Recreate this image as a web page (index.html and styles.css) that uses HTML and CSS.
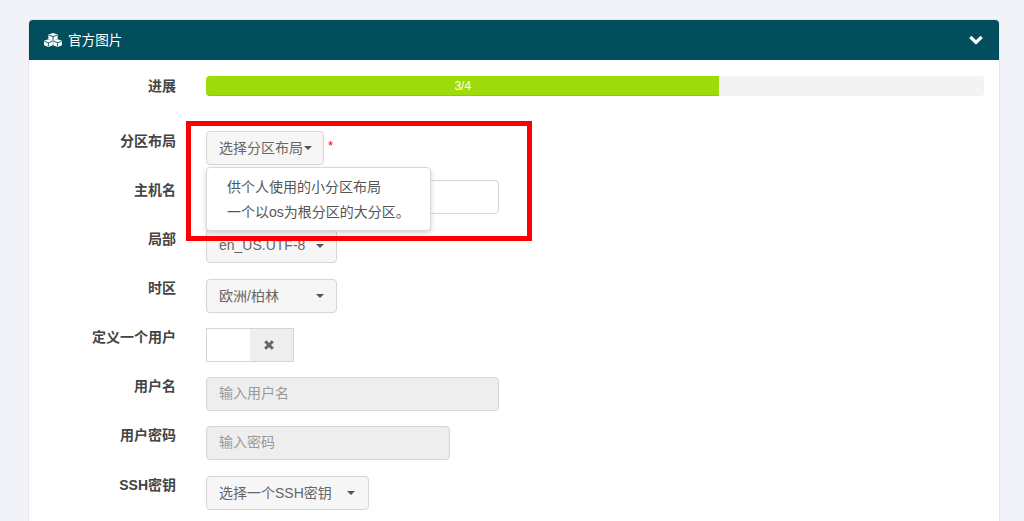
FILE: index.html
```html
<!DOCTYPE html>
<html>
<head>
  <title>官方图片</title>
  <link rel="stylesheet" href="styles.css">
</head>
<body>
  <div class="panel">
    <div class="panel-heading">
      <svg class="icon-cubes" viewBox="0 0 18 14">
        <path fill="#fff" d="M9 0 13.6 1.6V6.2L9 7.8 4.4 6.2V1.6Z"/>
        <path fill="#fff" d="M4.4 6.2 8.8 7.8V12.3L4.4 14 0 12.3V7.8Z"/>
        <path fill="#fff" d="M13.6 6.2 18 7.8V12.3L13.6 14 9.2 12.3V7.8Z"/>
        <path fill="none" stroke="#024e5d" stroke-width=".9" d="M5 2.2 9 3.6 13 2.2M9 3.6V7.2M.5 8.3 4.4 9.7 8.3 8.3M4.4 9.7V13.4M9.7 8.3 13.6 9.7 17.5 8.3M13.6 9.7V13.4"/>
      </svg>
      <span class="panel-title">官方图片</span>
      <svg class="icon-chevron" viewBox="0 0 14 10">
        <path fill="none" stroke="#fff" stroke-width="3.2" d="M1.3 1.8 7 7.5 12.7 1.8"/>
      </svg>
    </div>
    <div class="panel-body">
      <div class="form-row progress-row">
        <label class="form-label progress-label">进展</label>
        <div class="progress">
          <div class="progress-bar" style="width: 66%">3/4</div>
        </div>
      </div>

      <div class="form-row">
        <label class="form-label">分区布局</label>
        <button class="btn btn-tight">选择分区布局<span class="caret caret-tight"></span></button>
        <span class="required">*</span>
        <ul class="dropdown-menu">
          <li>供个人使用的小分区布局</li>
          <li>一个以os为根分区的大分区。</li>
        </ul>
      </div>

      <div class="form-row">
        <label class="form-label">主机名</label>
        <input class="input input-wide" type="text">
      </div>

      <div class="form-row">
        <label class="form-label">局部</label>
        <button class="btn btn-locale">en_US.UTF-8<span class="caret"></span></button>
      </div>

      <div class="form-row">
        <label class="form-label">时区</label>
        <button class="btn btn-locale">欧洲/柏林<span class="caret"></span></button>
      </div>

      <div class="form-row">
        <label class="form-label">定义一个用户</label>
        <div class="toggle">
          <div class="toggle-blank"></div>
          <div class="toggle-off">
            <svg viewBox="0 0 10 10" width="10" height="10">
              <path fill="none" stroke="#666" stroke-width="3" d="M1.2 1.2 8.8 8.8M8.8 1.2 1.2 8.8"/>
            </svg>
          </div>
        </div>
      </div>

      <div class="form-row">
        <label class="form-label">用户名</label>
        <input class="input input-wide" type="text" placeholder="输入用户名" disabled>
      </div>

      <div class="form-row password-row">
        <label class="form-label">用户密码</label>
        <input class="input input-mid" type="text" placeholder="输入密码" disabled>
      </div>

      <div class="form-row ssh-row">
        <label class="form-label">SSH密钥</label>
        <button class="btn btn-ssh">选择一个SSH密钥<span class="caret"></span></button>
      </div>
    </div>
    <div class="highlight-box"></div>
  </div>
</body>
</html>
```

FILE: styles.css
```css
html, body {
  height: 521px;
  overflow: hidden;
}

body {
  margin: 0;
  padding: 20px 25px 0 29px;
  background-color: #f1f3f8;
  font-family: "Liberation Sans", "Noto Sans CJK SC", sans-serif;
  font-size: 14px;
  color: #666666;
}

.panel {
  position: relative;
  height: 520px;
  background-color: #ffffff;
  border-radius: 4px 4px 0 0;
  box-shadow: 0 0 0 1px #e4e6ea;
}

.panel-heading {
  display: flex;
  align-items: center;
  height: 40px;
  padding: 0 16px 0 15px;
  background-color: #024e5d;
  border-radius: 4px 4px 0 0;
  color: #ffffff;
}

.icon-cubes {
  width: 18px;
  height: 14px;
  margin-right: 6px;
  margin-bottom: 1px;
}

.panel-title {
  flex: 1;
  padding-bottom: 2px;
  font-size: 13.6px;
}

.icon-chevron {
  width: 14px;
  height: 10px;
  margin-bottom: 1px;
}

.panel-body {
  padding-top: 16px;
}

.form-row {
  position: relative;
  display: flex;
  align-items: flex-start;
  height: 34px;
  margin-bottom: 15.2px;
}

.progress-row {
  height: 20px;
  margin-bottom: 35px;
}

.password-row {
  margin-bottom: 16px;
}

.form-label {
  flex: none;
  width: 147px;
  margin-top: -0.5px;
  margin-right: 30px;
  text-align: right;
  font-weight: bold;
  color: #444444;
  line-height: 20px;
}

.progress-label {
  margin-top: 0;
}

.password-row .form-label,
.ssh-row .form-label {
  margin-top: -1px;
}

.progress {
  width: 778px;
  height: 20px;
  background-color: #f3f3f3;
  border-radius: 4px;
}

.progress-bar {
  height: 20px;
  background-color: #9fdb0b;
  border-bottom: 1px solid #8fca08;
  box-sizing: border-box;
  border-radius: 4px 0 0 4px;
  color: #ffffff;
  font-size: 12px;
  line-height: 20px;
  text-align: center;
}

.btn {
  display: flex;
  align-items: center;
  height: 34px;
  padding: 0 12px 2px;
  border: 1px solid #d5d5d5;
  border-radius: 4px;
  background-color: #f6f6f6;
  color: #666666;
  font-family: inherit;
  font-size: 14px;
  box-sizing: border-box;
}

.btn-tight {
  width: 118px;
  white-space: nowrap;
}

.btn-locale {
  justify-content: space-between;
  width: 131px;
}

.btn-ssh {
  justify-content: space-between;
  width: 163px;
  padding-right: 13px;
}

.caret {
  width: 0;
  height: 0;
  margin-top: 2px;
  border-top: 4px solid #555555;
  border-left: 4px solid transparent;
  border-right: 4px solid transparent;
}

.caret-tight {
  margin-left: 1px;
}

.required {
  margin: 7px 0 0 4px;
  color: #ff0000;
  font-size: 13px;
}

.dropdown-menu {
  position: absolute;
  top: 36px;
  left: 177px;
  width: 225px;
  height: 64px;
  margin: 0;
  padding: 6.6px 0 0 20px;
  box-sizing: border-box;
  list-style-type: none;
  background-color: #ffffff;
  border: 1px solid #d9d9d9;
  border-radius: 4px;
  box-shadow: 0 2px 5px rgba(0, 0, 0, 0.18);
  z-index: 2;
}

.dropdown-menu li {
  height: 25px;
  line-height: 25px;
  color: #555555;
  white-space: nowrap;
}

.input {
  height: 34px;
  padding: 0 12px 2px;
  border: 1px solid #d5d5d5;
  border-radius: 4px;
  background-color: #ffffff;
  font-family: inherit;
  font-size: 14px;
  box-sizing: border-box;
}

.input:disabled {
  background-color: #eeeeee;
}

.input::placeholder {
  color: #999999;
  opacity: 1;
}

.input-wide {
  width: 293px;
}

.input-mid {
  width: 244px;
}

.toggle {
  display: flex;
  width: 88px;
  height: 34px;
  border: 1px solid #d5d5d5;
  box-sizing: border-box;
}

.toggle-blank {
  width: 43px;
  background-color: #ffffff;
}

.toggle-off {
  display: flex;
  flex: 1;
  align-items: center;
  justify-content: center;
  padding-right: 6px;
  background-color: #eeeeee;
}

.highlight-box {
  position: absolute;
  top: 101px;
  left: 157px;
  width: 346px;
  height: 120px;
  box-sizing: border-box;
  border: 5px solid #ff0000;
  z-index: 3;
}
```
